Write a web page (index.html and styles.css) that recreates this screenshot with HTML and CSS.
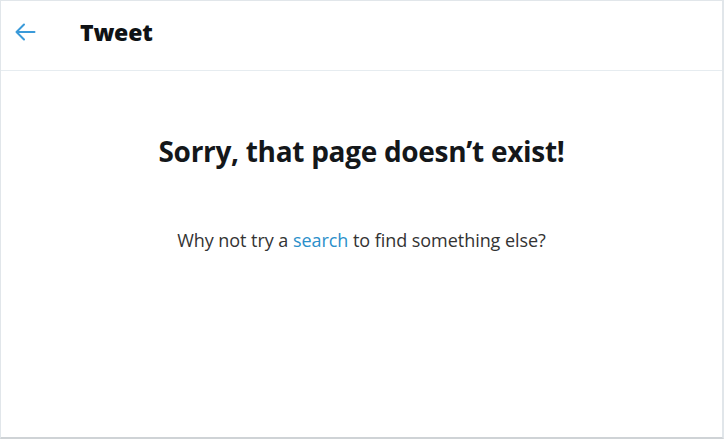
FILE: index.html
```html
<!DOCTYPE html>
<html>
<head>
<meta charset="utf-8">
<link rel="stylesheet" href="styles.css">
</head>
<body>
<div class="frame">
  <header class="topbar">
    <a class="back" href="#" aria-label="Back">
      <svg viewBox="0 0 22 22" width="22" height="22"><path d="M20.5 11H2.5M10 3.5 2.5 11l7.5 7.5"/></svg>
    </a>
    <h2 class="title">Tweet</h2>
  </header>
  <main class="content">
    <h1 class="headline">Sorry, that page doesn’t exist!</h1>
    <p class="hint">Why not try a <a href="#" class="link">search</a> to find something else?</p>
  </main>
</div>
</body>
</html>
```
FILE: styles.css
```css
html, body {
  margin: 0;
  padding: 0;
  background: #fff;
}
body {
  font-family: "Open Sans", "Noto Sans", sans-serif;
  color: #14171a;
}
.frame {
  box-sizing: border-box;
  width: 724px;
  height: 439px;
  border: 1px solid #e1e6ea;
  border-bottom: 2px solid #cfd3d6;
  border-right: 2px solid #e1e6ea;
}
.topbar {
  box-sizing: border-box;
  height: 70px;
  display: flex;
  align-items: center;
  border-bottom: 1px solid #e6ecf0;
  padding: 0 0 8px 13px;
}
.back {
  display: flex;
  width: 22px;
  height: 22px;
}
.back svg {
  fill: none;
  stroke: #3a9ad9;
  stroke-width: 2;
  stroke-linecap: round;
  stroke-linejoin: round;
}
.title {
  margin: 0 0 0 44px;
  font-size: 23px;
  line-height: 32px;
  font-weight: 800;
  color: #0f1215;
  letter-spacing: -0.2px;
}
.content {
  display: flex;
  flex-direction: column;
  align-items: center;
}
.headline {
  margin: 61px 0 0;
  font-size: 28px;
  font-weight: 700;
  letter-spacing: -0.3px;
}
.hint {
  margin: 58px 0 0;
  font-size: 18px;
  letter-spacing: -0.05px;
  color: #333;
}
.link {
  color: #2b8fca;
  text-decoration: none;
}
```
